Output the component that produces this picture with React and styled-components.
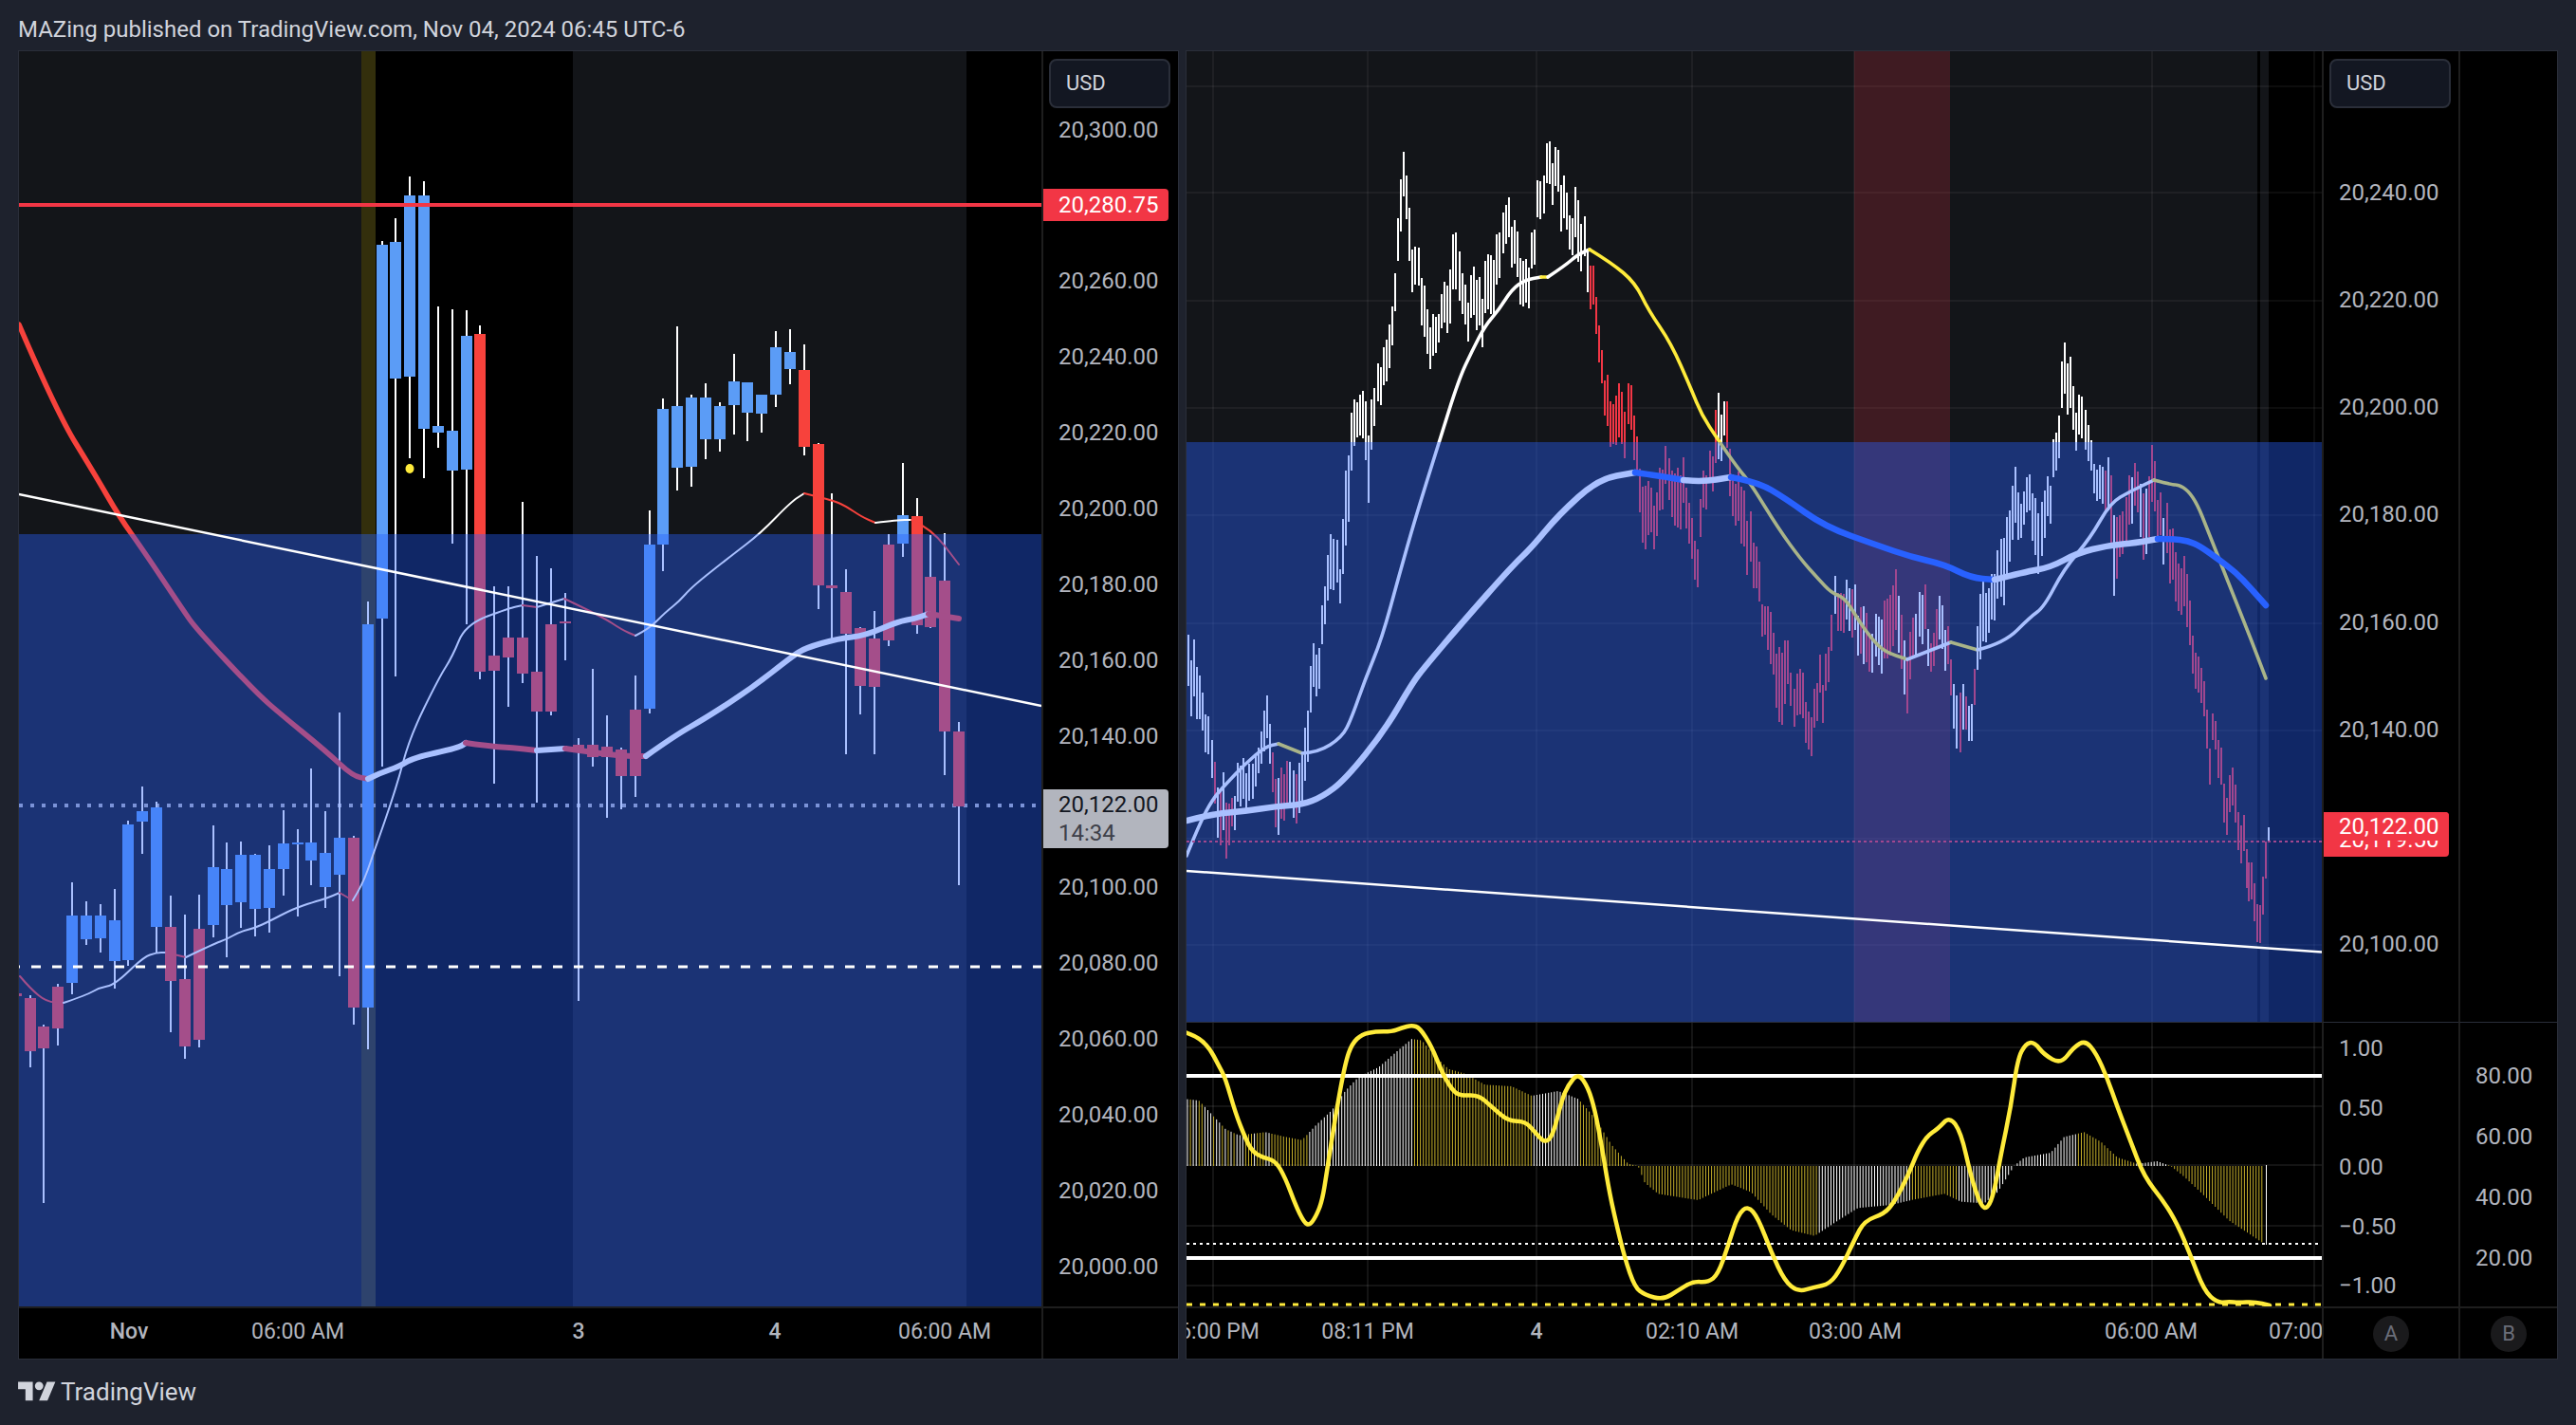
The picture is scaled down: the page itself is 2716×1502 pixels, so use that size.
import React from "react";
import styled, { createGlobalStyle } from "styled-components";

// chart geometry is kept in page pixels, each svg viewBox maps back to its pane
const UP = "#5b9cf6";
const DOWN = "#f7423c";
const WHITE = "#ffffff";
const YELLOW = "#ffeb3b";
const BLUE = "#2962ff";

const leftCandles = [
  [0, 1047, 1047, 1050, 1050, "d"],
  [1, 1049, 1052, 1108, 1125, "d"], [2, 1080, 1082, 1105, 1268, "d"], [3, 1037, 1040, 1084, 1102, "d"],
  [4, 930, 965, 1036, 1048, "u"], [5, 950, 965, 990, 996, "u"], [6, 953, 965, 989, 1004, "u"],
  [7, 937, 970, 1013, 1042, "u"], [8, 865, 869, 1012, 1018, "u"], [9, 829, 855, 866, 900, "u"],
  [10, 845, 851, 977, 1004, "u"], [11, 944, 977, 1034, 1088, "d"], [12, 964, 1032, 1103, 1116, "d"],
  [13, 943, 979, 1096, 1104, "d"], [14, 870, 914, 975, 988, "u"], [15, 888, 916, 954, 1009, "u"],
  [16, 887, 901, 951, 978, "u"], [17, 900, 901, 958, 987, "u"], [18, 891, 916, 957, 983, "u"],
  [19, 854, 889, 916, 944, "u"], [20, 874, 888, 890, 966, "u"], [21, 810, 888, 907, 933, "u"],
  [22, 855, 899, 935, 957, "u"], [23, 751, 883, 922, 1029, "u"], [24, 881, 883, 1062, 1080, "d"],
  [25, 634, 658, 1062, 1106, "u"], [26, 254, 258, 652, 808, "u"], [27, 230, 255, 399, 713, "u"],
  [28, 186, 206, 397, 483, "u"], [29, 191, 206, 452, 504, "u"], [30, 323, 449, 456, 472, "u"],
  [31, 326, 454, 496, 573, "u"], [32, 327, 354, 495, 658, "u"], [33, 343, 352, 708, 716, "d"],
  [34, 618, 691, 707, 826, "d"], [35, 618, 672, 693, 745, "d"], [36, 529, 672, 710, 720, "d"],
  [37, 586, 708, 750, 846, "d"], [38, 599, 658, 750, 754, "d"], [39, 625, 655, 657, 696, "d"],
  [40, 778, 785, 790, 1055, "d"], [41, 705, 785, 798, 808, "d"], [42, 754, 787, 798, 862, "d"],
  [43, 788, 790, 818, 853, "d"], [44, 712, 748, 818, 840, "d"], [45, 538, 574, 747, 752, "u"],
  [46, 420, 431, 574, 602, "u"], [47, 344, 428, 493, 517, "u"], [48, 416, 419, 492, 513, "u"],
  [49, 404, 419, 463, 484, "u"], [50, 424, 428, 463, 476, "u"], [51, 373, 402, 427, 458, "u"],
  [52, 403, 403, 435, 465, "u"], [53, 416, 416, 436, 456, "u"], [54, 349, 366, 416, 429, "u"],
  [55, 347, 371, 389, 405, "u"], [56, 363, 390, 471, 480, "d"], [57, 467, 468, 617, 642, "d"],
  [58, 520, 617, 620, 676, "d"], [59, 600, 624, 668, 795, "d"], [60, 661, 662, 723, 753, "d"],
  [61, 644, 673, 724, 795, "d"], [62, 563, 574, 675, 681, "d"], [63, 488, 543, 573, 587, "u"],
  [64, 525, 544, 659, 668, "d"], [65, 564, 608, 661, 662, "d"], [66, 562, 612, 771, 817, "d"],
  [67, 761, 771, 850, 933, "d"],
];

const leftLines = [
  [5.5, DOWN, [[20, 342], [60, 435], [100, 500], [126, 545], [151, 580], [193, 643], [207, 663], [270, 730], [295, 752], [344, 792], [372, 818], [388, 821]]],
  [6, WHITE, [[388, 821], [400, 815], [421, 808], [435, 799], [484, 788], [491, 783]]],
  [6, DOWN, [[491, 783], [519, 787], [540, 788], [566, 791]]],
  [6, WHITE, [[566, 791], [596, 789]]],
  [6, DOWN, [[596, 789], [618, 792], [656, 797], [681, 797]]],
  [6, WHITE, [[681, 797], [712, 775], [744, 757], [793, 725], [835, 692], [849, 683], [884, 673], [912, 670], [947, 655], [965, 652], [979, 647]]],
  [6, DOWN, [[979, 647], [1011, 652]]],
  [2, DOWN, [[21, 1029], [32, 1042], [49, 1056], [67, 1057]]],
  [2, WHITE, [[67, 1057], [91, 1049], [105, 1041], [121, 1038], [151, 1009], [165, 1004], [175, 1004]]],
  [2, DOWN, [[175, 1004], [196, 1009]]],
  [2, WHITE, [[196, 1009], [225, 995], [239, 990], [253, 982], [269, 978], [284, 971], [309, 958], [330, 951], [344, 947], [358, 941]]],
  [2, DOWN, [[358, 941], [372, 949]]],
  [2, WHITE, [[372, 949], [382, 933], [393, 902], [418, 830], [432, 777], [463, 714], [477, 692], [491, 658], [537, 641], [551, 638]]],
  [2, DOWN, [[551, 638], [566, 640]]],
  [2, WHITE, [[566, 640], [595, 631]]],
  [2, DOWN, [[595, 631], [635, 650], [656, 664], [670, 670]]],
  [2, WHITE, [[670, 670], [684, 663], [702, 645], [716, 634], [730, 618], [772, 585], [802, 562], [834, 529], [848, 520]]],
  [2, DOWN, [[848, 520], [877, 527], [891, 533], [909, 545], [923, 551]]],
  [2, WHITE, [[923, 551], [947, 548], [961, 548]]],
  [2, DOWN, [[961, 548], [982, 557], [1011, 595]]],
];

const rightLines = [
  [3.6, WHITE, [[1251, 902], [1264, 870], [1278, 843], [1292, 827], [1313, 805], [1334, 787], [1348, 784]]],
  [3.6, YELLOW, [[1348, 784], [1373, 794]]],
  [3.6, WHITE, [[1373, 794], [1390, 793], [1415, 777], [1425, 757], [1439, 717], [1457, 673], [1475, 607], [1492, 547], [1517, 467], [1538, 400], [1552, 370], [1566, 343], [1580, 327], [1594, 305], [1608, 295], [1625, 292]]],
  [3.6, YELLOW, [[1625, 292], [1632, 292]]],
  [3.6, WHITE, [[1632, 292], [1650, 280], [1664, 268], [1676, 263]]],
  [3.6, YELLOW, [[1676, 263], [1699, 277], [1724, 298], [1738, 327], [1762, 362], [1783, 410], [1794, 437], [1811, 463], [1832, 493], [1846, 510], [1875, 557], [1899, 590], [1917, 610], [1931, 625], [1945, 630], [1959, 653], [1973, 673], [1987, 687], [2011, 695]]],
  [3.6, WHITE, [[2011, 695], [2057, 677]]],
  [3.6, YELLOW, [[2057, 677], [2085, 685]]],
  [3.6, WHITE, [[2085, 685], [2113, 678], [2141, 650], [2155, 640], [2176, 600], [2204, 567], [2225, 530], [2246, 518], [2271, 506]]],
  [3.6, YELLOW, [[2271, 506], [2290, 511], [2297, 511], [2307, 517], [2317, 532], [2327, 557], [2340, 590], [2357, 633], [2373, 673], [2389, 715]]],
  [6.5, WHITE, [[1251, 865], [1278, 858], [1313, 855], [1345, 850], [1373, 848], [1394, 840], [1418, 822], [1460, 770], [1489, 720], [1503, 702], [1541, 657], [1594, 597], [1615, 577], [1643, 543], [1685, 505], [1724, 498]]],
  [6.5, BLUE, [[1724, 498], [1752, 502], [1775, 506]]],
  [6.5, WHITE, [[1775, 506], [1794, 508], [1825, 503]]],
  [6.5, BLUE, [[1825, 503], [1853, 508], [1882, 525], [1924, 555], [1980, 575], [2015, 587], [2050, 595], [2078, 609], [2103, 611]]],
  [6.5, WHITE, [[2103, 611], [2134, 603], [2162, 598], [2190, 583], [2222, 575], [2253, 572], [2275, 568]]],
  [6.5, BLUE, [[2275, 568], [2290, 568], [2307, 570], [2320, 576], [2337, 588], [2357, 603], [2373, 620], [2389, 638]]],
];

// envelope of the small bars: [x in 1.425 scale from 1250, top, bottom]
const barShape = [
  [0, 693, 740], [8, 680, 740], [15, 693, 752], [25, 727, 767], [35, 767, 807], [42, 797, 837], [50, 820, 877], [60, 827, 890],
  [70, 843, 873], [80, 800, 843], [90, 807, 850], [100, 800, 837], [110, 800, 827], [120, 737, 783], [130, 793, 833], [140, 813, 873],
  [150, 820, 867], [160, 793, 843], [170, 807, 860], [180, 760, 817], [190, 690, 737], [200, 680, 723], [210, 617, 657], [220, 570, 630],
  [232, 590, 625], [240, 503, 583], [250, 430, 490], [258, 430, 467], [267, 423, 473], [275, 450, 523], [283, 430, 470], [290, 390, 430],
  [298, 373, 413], [305, 353, 400], [312, 320, 360], [318, 252, 293], [325, 193, 252], [330, 155, 195], [337, 233, 290], [343, 267, 307],
  [350, 277, 317], [357, 290, 347], [365, 357, 400], [373, 343, 387], [380, 333, 363], [388, 303, 343], [397, 277, 333], [408, 240, 300],
  [415, 277, 320], [425, 307, 347], [435, 293, 347], [445, 303, 353], [460, 267, 330], [472, 245, 293], [480, 197, 237], [488, 228, 270],
  [496, 253, 300], [505, 277, 327], [515, 273, 317], [523, 237, 273], [530, 193, 233], [540, 163, 203], [548, 167, 213], [557, 160, 200],
  [565, 182, 232], [572, 203, 243], [580, 223, 257], [590, 207, 273], [598, 237, 277], [605, 255, 303], [612, 288, 330], [618, 322, 360],
  [623, 340, 380], [628, 380, 410], [635, 413, 470], [642, 417, 457], [650, 395, 453], [658, 420, 473], [665, 420, 463], [672, 420, 470],
  [680, 472, 510], [690, 510, 580], [700, 520, 567], [710, 517, 563], [722, 480, 520], [732, 490, 540], [740, 493, 557], [750, 500, 543],
  [760, 527, 570], [768, 590, 630], [780, 488, 527], [790, 477, 507], [800, 405, 477], [808, 440, 473], [815, 437, 490], [825, 513, 553],
  [835, 507, 567], [845, 550, 607], [855, 557, 603], [862, 600, 642], [870, 652, 680], [878, 632, 690], [885, 690, 730], [892, 687, 767],
  [900, 667, 740], [908, 690, 723], [915, 713, 753], [925, 713, 763], [935, 737, 777], [942, 757, 798], [950, 697, 737], [958, 710, 750],
  [968, 673, 710], [976, 610, 650], [985, 627, 667], [995, 625, 667], [1003, 607, 660], [1012, 643, 683], [1020, 630, 693], [1028, 673, 713],
  [1036, 657, 700], [1045, 650, 707], [1055, 623, 687], [1068, 613, 677], [1075, 650, 707], [1085, 680, 737], [1095, 643, 683], [1108, 620, 673],
  [1120, 663, 693], [1135, 635, 683], [1150, 690, 727], [1163, 730, 795], [1172, 743, 777], [1182, 737, 777], [1188, 687, 723], [1195, 617, 690],
  [1205, 627, 673], [1220, 583, 633], [1230, 570, 643], [1238, 543, 597], [1248, 490, 550], [1256, 533, 567], [1268, 503, 540], [1280, 530, 597],
  [1296, 507, 547], [1308, 463, 503], [1315, 402, 450], [1322, 363, 417], [1330, 378, 432], [1338, 428, 468], [1348, 423, 467], [1355, 425, 465],
  [1362, 477, 507], [1370, 500, 533], [1383, 480, 523], [1395, 530, 617], [1405, 532, 573], [1415, 510, 563], [1430, 488, 530], [1440, 517, 590],
  [1455, 463, 520], [1462, 522, 563], [1478, 540, 597], [1495, 592, 640], [1505, 593, 650], [1512, 663, 703], [1525, 713, 750],
];

const barTail = [
  [2327, 748, 789], [2330, 789, 827], [2333, 752, 780], [2336, 760, 790], [2339, 780, 820], [2342, 788, 827], [2345, 826, 867], [2348, 841, 880],
  [2351, 817, 856], [2354, 809, 849], [2357, 827, 867], [2360, 856, 896], [2363, 870, 910], [2366, 859, 897], [2369, 895, 936], [2371, 909, 950],
  [2374, 909, 948], [2377, 931, 971], [2380, 953, 993], [2383, 954, 994], [2386, 924, 964], [2389, 887, 926],
];

const noise = (i) => {
  const s = Math.sin(i * 12.9898) * 43758.5453;
  return s - Math.floor(s);
};

const lerpRow = (rows, d, col) => {
  for (let i = 1; i < rows.length; i++) {
    if (d <= rows[i][0]) {
      const t = (d - rows[i - 1][0]) / (rows[i][0] - rows[i - 1][0]);
      return rows[i - 1][col] + (rows[i][col] - rows[i - 1][col]) * t;
    }
  }
  return rows[rows.length - 1][col];
};

const isRedBar = (d, i) => {
  const mixed = (d > 40 && d < 70) || (d > 130 && d < 170) || (d > 975 && d < 1190) || (d > 1380 && d < 1470);
  if (mixed) return noise(i + 7) > 0.5;
  if (d >= 800 && d < 812) return false;
  return (d >= 605 && d < 975) || d >= 1470;
};

const buildBars = () => {
  let white = "";
  let red = "";
  let i = 0;
  for (let x = 1253; x < 2327; x += 3.07, i++) {
    const d = (x - 1250) * 1.425;
    const shift = (noise(i) - 0.5) * 34;
    const top = Math.round(lerpRow(barShape, d, 1) + shift);
    const bot = Math.round(lerpRow(barShape, d, 2) + shift);
    const seg = `M${Math.round(x)} ${top}V${bot}`;
    if (isRedBar(d, i)) red += seg;
    else white += seg;
  }
  barTail.forEach(([x, top, bot]) => {
    red += `M${x} ${top}V${bot}`;
  });
  white += "M2392 872V887";
  return { white, red };
};

const rightBars = buildBars();

// histogram outline of the lower pane, x in 1.425 scale from 1250 and y in 3x from 1050
const histShape = [
  [0, 325], [20, 330], [40, 375], [60, 420], [80, 440], [120, 430], [150, 445], [175, 455], [195, 410], [220, 360], [240, 300], [260, 255],
  [290, 225], [320, 170], [340, 135], [355, 140], [375, 190], [395, 230], [420, 245], [450, 280], [490, 285], [520, 315], [560, 300], [590, 325],
  [615, 385], [640, 470], [665, 530], [680, 537], [690, 590], [710, 625], [770, 645], [790, 625], [820, 595], [850, 620], [880, 690], [910, 740],
  [945, 758], [980, 710], [1010, 670], [1060, 660], [1090, 645], [1140, 625], [1165, 650], [1200, 655], [1220, 620], [1245, 537], [1260, 510],
  [1300, 495], [1320, 445], [1350, 430], [1375, 460], [1400, 510], [1430, 530], [1460, 522], [1480, 537], [1500, 570], [1530, 630], [1568, 710], [1623, 786],
];

const isWhiteHist = (d, i) => {
  if (d < 135) return noise(i + 3) > 0.45;
  return (d >= 185 && d < 340) || (d >= 520 && d < 590) || (d >= 950 && d < 1090) || (d >= 1160 && d < 1340) || (d >= 1425 && d < 1475);
};

const buildHist = () => {
  let white = "";
  let gold = "";
  let i = 0;
  for (let x = 1252; x < 2387; x += 3.07, i++) {
    const d = (x - 1250) * 1.425;
    const y = 1050 + lerpRow(histShape, d, 1) / 3;
    const seg = `M${x.toFixed(1)} 1229V${y.toFixed(1)}`;
    if (isWhiteHist(d, i)) white += seg;
    else gold += seg;
  }
  white += "M2389.5 1228V1312";
  return { white, gold };
};

const hist = buildHist();

const oscD = [
  [0, 115], [15, 125], [35, 160], [50, 220], [60, 260], [75, 370], [90, 450], [100, 490], [115, 510], [135, 520], [150, 575], [165, 660], [178, 715],
  [186, 725], [195, 700], [205, 650], [212, 560], [225, 380], [240, 210], [250, 150], [265, 120], [285, 112], [310, 112], [325, 100], [340, 92], [352, 100],
  [370, 160], [385, 240], [400, 295], [412, 315], [440, 312], [460, 350], [485, 395], [510, 395], [525, 430], [540, 465], [552, 440], [565, 330], [575, 280],
  [590, 243], [605, 290], [615, 360], [625, 470], [635, 600], [645, 700], [660, 830], [675, 920], [690, 945], [718, 960], [740, 930], [762, 902], [785, 905],
  [800, 880], [815, 790], [830, 690], [845, 663], [860, 700], [880, 810], [900, 900], [920, 935], [945, 920], [968, 910], [985, 860], [1005, 770], [1020, 710],
  [1050, 688], [1065, 650], [1085, 570], [1100, 490], [1115, 440], [1130, 420], [1148, 380], [1165, 430], [1180, 570], [1195, 665], [1205, 672], [1215, 620],
  [1225, 500], [1240, 350], [1250, 200], [1262, 150], [1275, 145], [1290, 185], [1315, 215], [1335, 160], [1352, 140], [1368, 180], [1385, 260], [1400, 350],
  [1420, 460], [1440, 570], [1470, 650], [1490, 720], [1510, 820], [1530, 930], [1550, 970],
];

const oscillator = [
  ...oscD.map(([d, y]) => [1250 + d / 1.425, 1050 + y / 3]),
  [2350, 1372], [2360, 1373], [2377, 1372], [2393, 1376],
];

const smooth = (pts) => {
  let out = `M${pts[0][0]} ${pts[0][1]}`;
  for (let i = 1; i < pts.length - 1; i++) {
    const mx = (pts[i][0] + pts[i + 1][0]) / 2;
    const my = (pts[i][1] + pts[i + 1][1]) / 2;
    out += `Q${pts[i][0]} ${pts[i][1]} ${mx} ${my}`;
  }
  const last = pts[pts.length - 1];
  return `${out}L${last[0]} ${last[1]}`;
};

const gridX = [1279, 1442, 1620, 1784, 1955, 2269, 2440];
const gridY = [91, 203, 317, 430, 543, 657, 770, 884, 996];
const oscGridY = [1104, 1166, 1228, 1292, 1355];

function TrendLine({ lines }) {
  return lines.map(([width, color, pts], i) => (
    <path key={i} d={smooth(pts)} fill="none" stroke={color} strokeWidth={width} strokeLinecap="round" strokeLinejoin="round" />
  ));
}

function LeftPlot() {
  return (
    <Plot viewBox="20 54 1078 1323" width="1078" height="1323">
      <rect x="20" y="54" width="1078" height="1323" fill="#131519" />
      <rect x="381" y="54" width="223" height="1323" fill="#000" />
      <rect x="1019" y="54" width="79" height="1323" fill="#000" />
      <rect x="381" y="54" width="15" height="1323" fill="#ffeb3b" fillOpacity="0.2" />
      <line x1="20" x2="1098" y1="849" y2="849" stroke="#b2b5be" strokeWidth="4" strokeDasharray="4 8" />
      <g shapeRendering="crispEdges">
        {leftCandles.map(([i, wt, bt, bb, wb, dir]) => {
          const x = Math.round(31.6 + 14.84 * (i - 1));
          return (
            <g key={i}>
              <rect x={x - 1} y={wt} width="2" height={wb - wt} fill={WHITE} />
              <rect x={x - 6} y={bt} width="12" height={bb - bt} fill={dir === "u" ? UP : DOWN} />
            </g>
          );
        })}
      </g>
      <TrendLine lines={leftLines} />
      <ellipse cx="432" cy="494" rx="4.5" ry="5" fill={YELLOW} />
      <rect x="20" y="563" width="1078" height="814" fill={BLUE} fillOpacity="0.4" />
      <line x1="20" x2="1098" y1="216" y2="216" stroke="#f23645" strokeWidth="4" />
      <line x1="20" x2="1098" y1="521" y2="744" stroke={WHITE} strokeWidth="2.5" />
      <line x1="11" x2="1098" y1="1019" y2="1019" stroke={WHITE} strokeWidth="3" strokeDasharray="10 12" />
    </Plot>
  );
}

function RightPlot() {
  return (
    <Plot viewBox="1251 54 1197 1023" width="1197" height="1023">
      <rect x="1251" y="54" width="1197" height="1023" fill="#131519" />
      <rect x="2380" y="54" width="3" height="1023" fill="#000" />
      <rect x="2392" y="54" width="56" height="1023" fill="#000" />
      <g stroke="#ffffff" strokeOpacity="0.05" strokeWidth="2" shapeRendering="crispEdges">
        {gridX.map((x) => <line key={x} x1={x} x2={x} y1="54" y2="1077" />)}
        {gridY.map((y) => <line key={y} x1="1251" x2="2448" y1={y} y2={y} />)}
      </g>
      <rect x="1955" y="54" width="101" height="1023" fill="#f23645" fillOpacity="0.2" />
      <g fill="none" strokeWidth="2" shapeRendering="crispEdges">
        <path d={rightBars.white} stroke={WHITE} />
        <path d={rightBars.red} stroke="#f23645" />
      </g>
      <TrendLine lines={rightLines} />
      <line x1="1251" x2="2448" y1="887" y2="887" stroke="#f23645" strokeWidth="2" strokeDasharray="3 3" />
      <rect x="1251" y="466" width="1197" height="611" fill={BLUE} fillOpacity="0.4" />
      <line x1="1251" x2="2448" y1="918" y2="1003.5" stroke={WHITE} strokeWidth="2.5" />
    </Plot>
  );
}

function OscillatorPlot() {
  return (
    <Plot viewBox="1251 1078 1197 299" width="1197" height="299">
      <g stroke="#ffffff" strokeOpacity="0.08" strokeWidth="2" shapeRendering="crispEdges">
        {gridX.map((x) => <line key={x} x1={x} x2={x} y1="1078" y2="1377" />)}
        {oscGridY.map((y) => <line key={y} x1="1251" x2="2448" y1={y} y2={y} />)}
      </g>
      <path d={hist.gold} stroke="#c4ae2a" strokeWidth="1" fill="none" />
      <path d={hist.white} stroke={WHITE} strokeWidth="1" fill="none" />
      <line x1="1251" x2="2448" y1="1134" y2="1134" stroke={WHITE} strokeWidth="4" />
      <line x1="1251" x2="2448" y1="1326" y2="1326" stroke={WHITE} strokeWidth="4" />
      <line x1="1251" x2="2448" y1="1311" y2="1311" stroke={WHITE} strokeWidth="2" strokeDasharray="3 4" />
      <line x1="1251" x2="2448" y1="1375" y2="1375" stroke={YELLOW} strokeWidth="3" strokeDasharray="6 8" />
      <path d={smooth(oscillator)} fill="none" stroke={YELLOW} strokeWidth="4.5" strokeLinejoin="round" strokeLinecap="round" />
    </Plot>
  );
}

// empty rows sit behind the price tags and keep the spacing of the scale
const leftPrices = ["20,300.00", "", "20,260.00", "20,240.00", "20,220.00", "20,200.00", "20,180.00", "20,160.00", "20,140.00", "", "20,100.00", "20,080.00", "20,060.00", "20,040.00", "20,020.00", "20,000.00"];
const rightPrices = ["20,240.00", "20,220.00", "20,200.00", "20,180.00", "20,160.00", "20,140.00", "", "20,100.00"];
const oscPrices = ["1.00", "0.50", "0.00", "−0.50", "−1.00"];
const percentPrices = ["80.00", "60.00", "40.00", "20.00"];

const leftTimes = [["Nov", 136, true], ["06:00 AM", 314], ["3", 610, true], ["4", 817, true], ["06:00 AM", 996]];
const rightTimes = [["06:00 PM", 1279], ["08:11 PM", 1442], ["4", 1620, true], ["02:10 AM", 1784], ["03:00 AM", 1956], ["06:00 AM", 2268], ["07:00 AM", 2441]];

function App() {
  return (
    <Page>
      <GlobalStyle />
      <Header>MAZing published on TradingView.com, Nov 04, 2024 06:45 UTC-6</Header>
      <Panels>
        <LeftChart>
          <PlotCell>
            <LeftPlot />
          </PlotCell>
          <PriceAxis $pad={66.5} $gap={47.9}>
            {leftPrices.map((p, i) => <Price key={i}>{p}</Price>)}
            <CurrencyBox>USD</CurrencyBox>
            <LineTag>20,280.75</LineTag>
            <CountdownTag>
              <strong>20,122.00</strong>
              <span>14:34</span>
            </CountdownTag>
          </PriceAxis>
          <TimeAxis>
            {leftTimes.map(([label, x, bold]) => (
              <TimeLabel key={label + x} $x={x - 20} $bold={bold}>{label}</TimeLabel>
            ))}
          </TimeAxis>
          <AxisCorner />
        </LeftChart>
        <RightChart>
          <PlotCell>
            <RightPlot />
          </PlotCell>
          <PriceAxis $pad={133} $gap={81.15}>
            {rightPrices.map((p, i) => <Price key={i}>{p}</Price>)}
            <CurrencyBox>USD</CurrencyBox>
            <LastTag>
              <OverlappedPrice>20,119.50</OverlappedPrice>
              <LastPrice>20,122.00</LastPrice>
            </LastTag>
          </PriceAxis>
          <EmptyAxis />
          <PlotCell $divided>
            <OscillatorPlot />
          </PlotCell>
          <PriceAxis $pad={11} $gap={30.5} $divided>
            {oscPrices.map((p) => <Price key={p}>{p}</Price>)}
          </PriceAxis>
          <PriceAxis $pad={40} $gap={32} $divided>
            {percentPrices.map((p) => <Price key={p}>{p}</Price>)}
          </PriceAxis>
          <TimeAxis>
            {rightTimes.map(([label, x, bold]) => (
              <TimeLabel key={label + x} $x={x - 1251} $bold={bold}>{label}</TimeLabel>
            ))}
          </TimeAxis>
          <AxisCorner><ScaleBadge>A</ScaleBadge></AxisCorner>
          <AxisCorner><ScaleBadge>B</ScaleBadge></AxisCorner>
        </RightChart>
      </Panels>
      <Footer>
        <svg width="40" height="31" viewBox="0 0 36 28" fill="#d1d4dc">
          <path d="M14 22H7V11H0V4h14v18zM28 22h-8l7.5-18h8L28 22z" />
          <circle cx="20" cy="8" r="4" />
        </svg>
        <Brand>TradingView</Brand>
      </Footer>
    </Page>
  );
}

const GlobalStyle = createGlobalStyle`
  html, body {
    margin: 0;
    background: #1e222d;
  }
  * {
    box-sizing: border-box;
  }
`;

const Page = styled.div`
  width: 2716px;
  height: 1502px;
  background: #1e222d;
  display: flex;
  flex-direction: column;
  font-family: Roboto, "Liberation Sans", sans-serif;
  overflow: hidden;
`;

const Header = styled.div`
  height: 53px;
  padding: 16px 0 0 19px;
  font-size: 24px;
  line-height: 30px;
  color: #d1d4dc;
  white-space: nowrap;
`;

const Panels = styled.div`
  display: flex;
  gap: 7px;
  padding-left: 19px;
  height: 1380px;
`;

const LeftChart = styled.div`
  width: 1224px;
  border: 1px solid #2a2e39;
  background: #000;
  display: grid;
  grid-template-columns: 1078px 144px;
  grid-template-rows: 1323px 55px;
`;

const RightChart = styled.div`
  width: 1447px;
  border: 1px solid #2a2e39;
  background: #000;
  display: grid;
  grid-template-columns: 1197px 144px 104px;
  grid-template-rows: 1023px 300px 55px;
`;

const PlotCell = styled.div`
  min-width: 0;
  border-top: ${(p) => (p.$divided ? "1px solid #2a2e39" : "none")};
`;

const Plot = styled.svg`
  display: block;
`;

const PriceAxis = styled.div`
  position: relative;
  display: flex;
  flex-direction: column;
  gap: ${(p) => p.$gap}px;
  padding: ${(p) => p.$pad}px 0 0 16px;
  border-left: 2px solid #1e1e1e;
  border-top: ${(p) => (p.$divided ? "1px solid #2a2e39" : "none")};
  overflow: hidden;
`;

const EmptyAxis = styled.div`
  border-left: 2px solid #1e1e1e;
`;

const Price = styled.div`
  font-size: 24px;
  line-height: 32px;
  height: 32px;
  color: #b2b5be;
  white-space: nowrap;
`;

const CurrencyBox = styled.div`
  position: absolute;
  left: 6px;
  top: 8px;
  width: 128px;
  height: 52px;
  padding-left: 16px;
  border: 2px solid #2a2e39;
  border-radius: 8px;
  background: #131722;
  color: #d1d4dc;
  font-size: 22px;
  line-height: 48px;
`;

const LineTag = styled.div`
  position: absolute;
  left: 0;
  top: 145px;
  width: 132px;
  height: 34px;
  padding-left: 16px;
  border-radius: 0 4px 4px 0;
  background: #f23645;
  color: #fff;
  font-size: 24px;
  line-height: 34px;
`;

const CountdownTag = styled.div`
  position: absolute;
  left: 0;
  top: 778px;
  width: 132px;
  height: 62px;
  padding: 1px 0 0 16px;
  border-radius: 0 4px 4px 0;
  background: #b2b5be;
  font-size: 24px;
  line-height: 30px;
  strong {
    display: block;
    font-weight: 400;
    color: #131722;
  }
  span {
    display: block;
    color: #3e4049;
  }
`;

const LastTag = styled.div`
  position: absolute;
  left: 0;
  top: 802px;
  width: 132px;
  height: 47px;
  overflow: hidden;
  border-radius: 0 4px 4px 0;
  background: #f23645;
  color: #fff;
  font-size: 24px;
`;

const LastPrice = styled.div`
  position: relative;
  height: 30px;
  padding-left: 16px;
  line-height: 30px;
  background: #f23645;
`;

const OverlappedPrice = styled.div`
  position: absolute;
  left: 16px;
  top: 13px;
  line-height: 32px;
`;

const TimeAxis = styled.div`
  position: relative;
  border-top: 2px solid #1e1e1e;
  overflow: hidden;
`;

const TimeLabel = styled.span`
  position: absolute;
  top: 9px;
  left: ${(p) => p.$x}px;
  transform: translateX(-50%);
  color: #b2b5be;
  font-size: 23px;
  line-height: 32px;
  white-space: nowrap;
  font-weight: ${(p) => (p.$bold ? 500 : 400)};
`;

const AxisCorner = styled.div`
  display: flex;
  align-items: center;
  justify-content: center;
  border-top: 2px solid #1e1e1e;
  border-left: 2px solid #1e1e1e;
`;

const ScaleBadge = styled.div`
  width: 38px;
  height: 38px;
  border-radius: 50%;
  background: #1a1a1c;
  color: #6a6d78;
  font-size: 22px;
  line-height: 38px;
  text-align: center;
`;

const Footer = styled.div`
  flex: 1;
  display: flex;
  align-items: center;
  padding-left: 19px;
  gap: 5px;
`;

const Brand = styled.div`
  color: #d1d4dc;
  font-size: 26px;
  line-height: 31px;
`;

export default App;
